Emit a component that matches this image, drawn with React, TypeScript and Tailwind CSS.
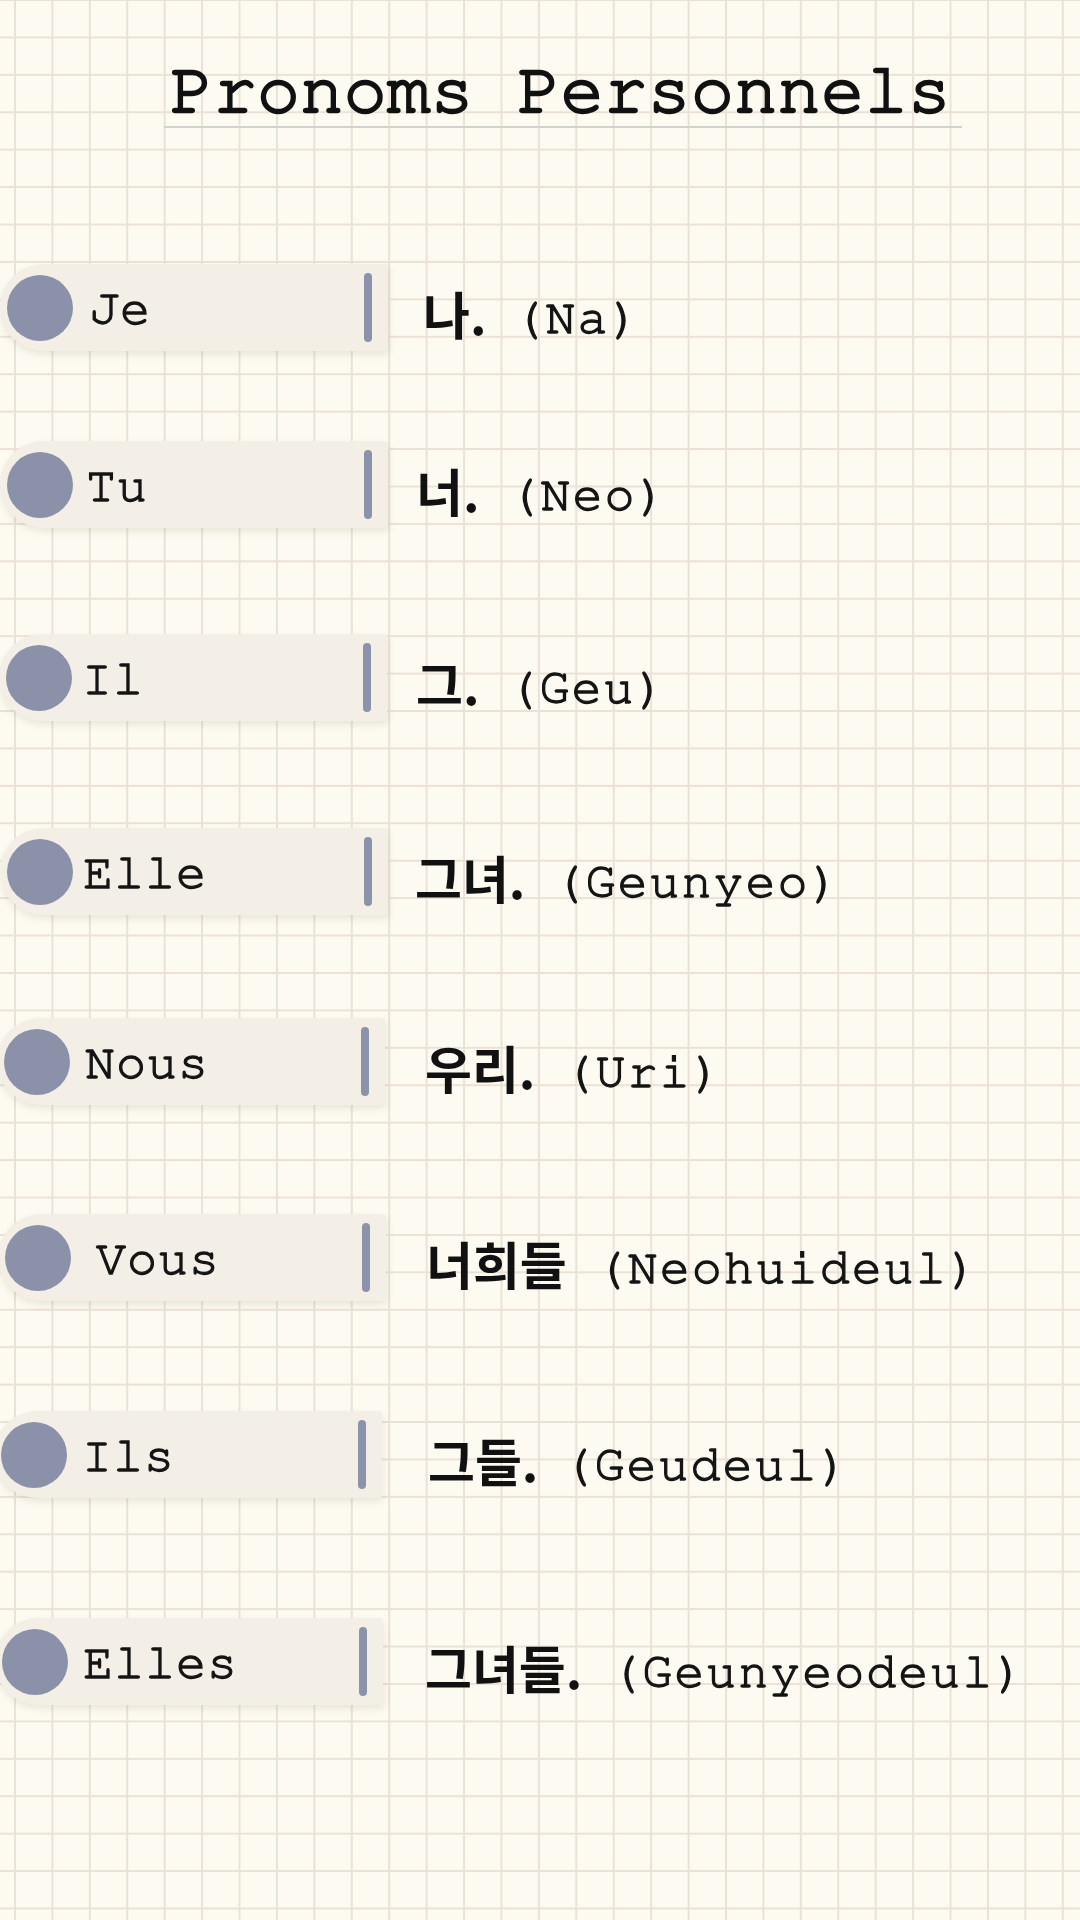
import React from "react";

type Row = {
  label: string;
  ko: string;
  roman: string;
  mt: string;
  dx: string;
  labelMl: string;
  koMl: string;
  romanMl: string;
};

const rows: Row[] = [
  { label: "Je", ko: "나.", roman: "(Na)", mt: "mt-[136px]", dx: "ml-0", labelMl: "ml-[16px]", koMl: "ml-[35px]", romanMl: "ml-[27px]" },
  { label: "Tu", ko: "너.", roman: "(Neo)", mt: "mt-[90px]", dx: "ml-0", labelMl: "ml-[13px]", koMl: "ml-[28px]", romanMl: "ml-[29px]" },
  { label: "Il", ko: "그.", roman: "(Geu)", mt: "mt-[106px]", dx: "-ml-[1px]", labelMl: "ml-[10px]", koMl: "ml-[29px]", romanMl: "ml-[28px]" },
  { label: "Elle", ko: "그녀.", roman: "(Geunyeo)", mt: "mt-[107px]", dx: "ml-0", labelMl: "ml-[10px]", koMl: "ml-[27px]", romanMl: "ml-[28px]" },
  { label: "Nous", ko: "우리.", roman: "(Uri)", mt: "mt-[103px]", dx: "-ml-[3px]", labelMl: "ml-[15px]", koMl: "ml-[40px]", romanMl: "ml-[28px]" },
  { label: "Vous", ko: "너희들", roman: "(Neohuideul)", mt: "mt-[109px]", dx: "-ml-[2px]", labelMl: "ml-[25px]", koMl: "ml-[40px]", romanMl: "ml-[29px]" },
  { label: "Ils", ko: "그들.", roman: "(Geudeul)", mt: "mt-[110px]", dx: "-ml-[6px]", labelMl: "ml-[15px]", koMl: "ml-[46px]", romanMl: "ml-[24px]" },
  { label: "Elles", ko: "그녀들.", roman: "(Geunyeodeul)", mt: "mt-[120px]", dx: "-ml-[5px]", labelMl: "ml-[15px]", koMl: "ml-[42px]", romanMl: "ml-[28px]" },
];

// courier-like stack, falls back to Liberation Mono (same widths)
const mono = "font-['Nimbus_Mono_PS','FreeMono','Courier_New','Liberation_Mono',monospace]";

function PronounRow({ row }: { row: Row }) {
  return (
    <div className={`flex items-start ${row.mt} ${row.dx}`}>
      <div className="flex h-[87px] w-[388px] shrink-0 items-center rounded-l-[44px] rounded-r-[3px] bg-[#f3efe6] pl-[7px] shadow-[1px_4px_7px_rgba(110,95,70,0.13)]">
        <span className="h-[66px] w-[66px] shrink-0 rounded-full bg-[#8a91a8]" />
        <span
          className={`${row.labelMl} mt-[2px] ${mono} text-[50px] leading-none tracking-[1px] text-[#141414] [-webkit-text-stroke:1.3px_#141414]`}
        >
          {row.label}
        </span>
        <span className="mr-[16px] ml-auto h-[69px] w-[8px] rounded-full bg-[#8b93aa]" />
      </div>
      <span
        className={`${row.koMl} mt-[24px] whitespace-nowrap font-['Noto_Sans_CJK_KR','Noto_Sans_CJK_SC',sans-serif] text-[51px] font-bold leading-none text-[#111]`}
      >
        {row.ko}
      </span>
      <span
        className={`${row.romanMl} mt-[29px] whitespace-nowrap ${mono} text-[50px] leading-none tracking-[2px] text-[#141414] [-webkit-text-stroke:1.3px_#141414]`}
      >
        {row.roman}
      </span>
    </div>
  );
}

export default function App() {
  return (
    <div className="h-[1920px] w-[1080px] overflow-hidden bg-[#fdfbf1] bg-[linear-gradient(to_right,#ebe1d6_2px,transparent_2px),linear-gradient(to_bottom,#ebe1d6_2px,transparent_2px)] bg-size-[37.43px_37.43px] bg-position-[14px_-1px]">
      <div className="ml-[164px] w-[798px] pt-[54px]">
        <h1
          className={`pl-[6px] ${mono} text-[72px] leading-none font-normal tracking-[0.2px] text-[#111] [-webkit-text-stroke:2.4px_#111]`}
        >
          Pronoms Personnels
        </h1>
        <div className="h-[2px] bg-[#d0d4ca]" />
      </div>

      <div className="flex flex-col">
        {rows.map((r) => (
          <PronounRow key={r.label} row={r} />
        ))}
      </div>
    </div>
  );
}
